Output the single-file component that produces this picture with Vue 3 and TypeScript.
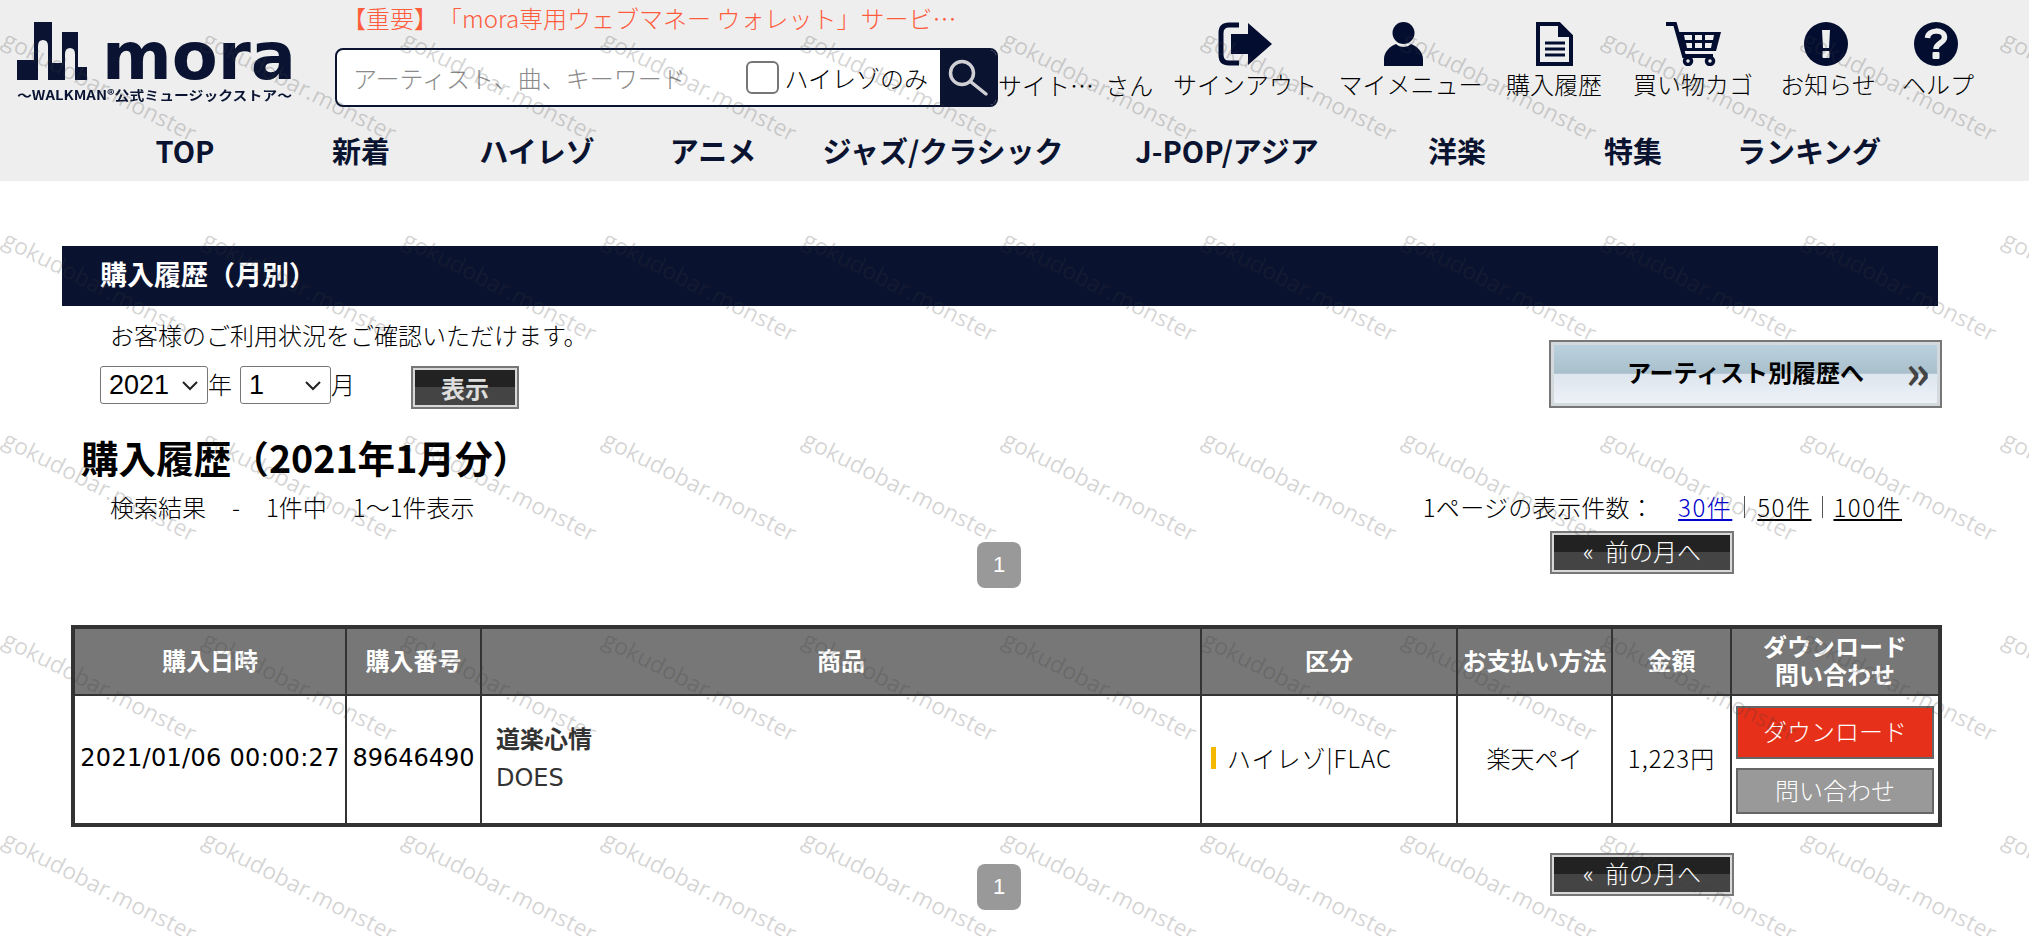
<script setup lang="ts">
const navItems = ['TOP', '新着', 'ハイレゾ', 'アニメ', 'ジャズ/クラシック', 'J-POP/アジア', '洋楽', '特集', 'ランキング']
const columns = ['購入日時', '購入番号', '商品', '区分', 'お支払い方法', '金額']
const marks = Array.from({ length: 55 }, (_, i) => i)
</script>

<template>
  <div class="page">
    <header class="header">
      <div class="header-top">
        <svg class="logo" viewBox="0 0 295 95" width="295" height="95">
          <path
            fill-rule="evenodd"
            fill="#0a1432"
            d="M7 65V45H24V7H42V48H52V17H68V52H77V65ZM28 65H38V31Q38 25 33 25Q28 25 28 31ZM55 65H65V39Q65 33 60 33Q55 33 55 39Z"
          />
          <text class="logo-word" x="92" y="64" textLength="194" lengthAdjust="spacingAndGlyphs">mora</text>
          <text class="logo-tag" x="7" y="85" textLength="275" lengthAdjust="spacingAndGlyphs">～WALKMAN®公式ミュージックストア～</text>
        </svg>

        <div class="search-col">
          <p class="notice">【重要】「mora専用ウェブマネー ウォレット」サービ…</p>
          <div class="search">
            <span class="placeholder">アーティスト、曲、キーワード</span>
            <label class="hires"><input type="checkbox" />ハイレゾのみ</label>
            <span class="search-btn">
              <svg viewBox="0 0 58 58" width="58" height="58">
                <circle cx="22" cy="24" r="11.5" fill="none" stroke="#cfcfd4" stroke-width="3.5" />
                <path d="M31 33L46 45" stroke="#cfcfd4" stroke-width="3.5" stroke-linecap="round" />
              </svg>
            </span>
          </div>
        </div>

        <div class="user-name">サイト… さん</div>

        <nav class="user-menu">
          <a class="menu-item">
            <svg viewBox="0 0 54 44" width="54" height="44">
              <path d="M21 3H11Q3 3 3 11V33Q3 41 11 41H21" fill="none" stroke="#030d30" stroke-width="5" />
              <path d="M13 12H30V1L54 22L30 43V32H13Z" fill="#030d30" />
            </svg>
            <span>サインアウト</span>
          </a>
          <a class="menu-item">
            <svg class="shift-big" viewBox="0 0 39 44" width="39" height="44">
              <circle cx="19.5" cy="11" r="11" fill="#030d30" />
              <path d="M0 44V37C0 30 6 24 12 22C16 26 23 26 27 22C33 24 39 30 39 37V44Z" fill="#030d30" />
            </svg>
            <span>マイメニュー</span>
          </a>
          <a class="menu-item">
            <svg viewBox="0 0 37 44" width="37" height="44">
              <path d="M2 2H23L35 14V42H2Z" fill="none" stroke="#030d30" stroke-width="4" />
              <path d="M22 2L36 15H22Z" fill="#030d30" />
              <path d="M9 21H29M9 27H29M9 33H29" stroke="#030d30" stroke-width="3" />
            </svg>
            <span>購入履歴</span>
          </a>
          <a class="menu-item">
            <svg viewBox="0 0 55 44" width="55" height="44">
              <path d="M0 2H9L18 34H47" fill="none" stroke="#030d30" stroke-width="4" />
              <path d="M12 10H55L50 29H17Z" fill="#030d30" />
              <path
                fill="#eee"
                d="M18 13H26V18H19ZM29 13H36V18H29ZM39 13H48L47 18H39ZM20 21H26V26H21ZM29 21H36V26H29ZM39 21H46L45 26H39Z"
              />
              <circle cx="22" cy="39" r="3.5" fill="#eee" stroke="#030d30" stroke-width="3.5" />
              <circle cx="44" cy="39" r="3.5" fill="#eee" stroke="#030d30" stroke-width="3.5" />
            </svg>
            <span>買い物カゴ</span>
          </a>
          <a class="menu-item">
            <svg class="shift-small" viewBox="0 0 44 44" width="44" height="44">
              <circle cx="22" cy="22" r="22" fill="#030d30" />
              <path d="M18 8H26L25 26H19Z" fill="#eee" />
              <rect x="18.500" y="29" width="7" height="7" rx="1" fill="#eee" />
            </svg>
            <span>お知らせ</span>
          </a>
          <a class="menu-item">
            <svg class="shift-small" viewBox="0 0 44 44" width="44" height="44">
              <circle cx="22" cy="22" r="22" fill="#030d30" />
              <path d="M13.500 16C14 7 30 7 30.500 15C31 21 22 21 22 27" fill="none" stroke="#eee" stroke-width="5.500" />
              <rect x="18.500" y="30" width="7" height="7" rx="1" fill="#eee" />
            </svg>
            <span>ヘルプ</span>
          </a>
        </nav>
      </div>

      <nav class="main-nav">
        <a v-for="item in navItems" :key="item">{{ item }}</a>
      </nav>
    </header>

    <main class="content">
      <h2 class="bar">購入履歴（月別）</h2>

      <div class="filter-row">
        <div>
          <p class="intro">お客様のご利用状況をご確認いただけます。</p>
          <form class="filter-form" @submit.prevent>
            <select class="year">
              <option>2021</option>
            </select>
            <span>年</span>
            <select class="month">
              <option>1</option>
            </select>
            <span>月</span>
            <button class="dark-btn show-btn">表示</button>
          </form>
        </div>
        <a class="artist-btn">アーティスト別履歴へ<span class="chevrons">»</span></a>
      </div>

      <h1 class="title">購入履歴（2021年1月分）</h1>

      <div class="results">
        <div class="count">
          <span>検索結果</span>
          <span>-</span>
          <span>1件中</span>
          <span>1～1件表示</span>
        </div>
        <div class="per-page">
          <span class="per-label">1ページの表示件数：</span>
          <a class="current">30件</a>
          <i></i>
          <a>50件</a>
          <i class="tight"></i>
          <a>100件</a>
        </div>
      </div>

      <div class="pager first">
        <span class="page-num">1</span>
        <a class="dark-btn prev-btn">« 前の月へ</a>
      </div>

      <table class="history">
        <thead>
          <tr>
            <th v-for="col in columns" :key="col">{{ col }}</th>
            <th>ダウンロード<br />問い合わせ</th>
          </tr>
        </thead>
        <tbody>
          <tr>
            <td class="wide-latin date">2021/01/06 00:00:27</td>
            <td class="wide-latin">89646490</td>
            <td class="product">
              <strong>道楽心情</strong>
              <span class="wide-latin">DOES</span>
            </td>
            <td class="kind"><span class="kind-inner">ハイレゾ|FLAC</span></td>
            <td>楽天ペイ</td>
            <td class="amount">1,223円</td>
            <td class="actions">
              <a class="action download">ダウンロード</a>
              <a class="action inquiry">問い合わせ</a>
            </td>
          </tr>
        </tbody>
      </table>

      <div class="pager last">
        <span class="page-num">1</span>
        <a class="dark-btn prev-btn">« 前の月へ</a>
      </div>
    </main>

    <div class="watermarks">
      <span v-for="n in marks" :key="n">gokudobar.monster</span>
    </div>
  </div>
</template>

<style>
html,
body {
  overflow: hidden;
  background: #fff;
}
</style>

<style scoped>
.page {
  position: relative;
  height: 936px;
  overflow: hidden;
  font-family: "Noto Sans CJK JP", "Noto Sans", sans-serif;
  font-size: 24px;
  font-weight: 300;
  color: #000;
  text-spacing-trim: space-all;
}
p,
h1,
h2 {
  margin: 0;
}

.header {
  height: 181px;
  background: #eee;
}
.header-top {
  display: flex;
  height: 130px;
}
.logo {
  flex: none;
  margin: 15px 30px 0 10px;
  filter: blur(0.5px);
}
.logo-word {
  font-family: "DejaVu Sans", sans-serif;
  font-weight: 700;
  font-size: 66px;
  fill: #0a1432;
}
.logo-tag {
  font-weight: 700;
  font-size: 13px;
  fill: #0a1432;
}
.search-col {
  flex: none;
  width: 663px;
}
.notice {
  height: 36px;
  padding-left: 7px;
  line-height: 36px;
  color: #ff5c3c;
  white-space: nowrap;
}
.search {
  display: flex;
  align-items: center;
  height: 59px;
  margin-top: 12px;
  background: #fff;
  border: 2px solid #0a1330;
  border-radius: 8px;
  box-sizing: border-box;
  overflow: hidden;
}
.placeholder {
  flex: 1;
  padding-left: 16px;
  color: #8a8a8a;
  white-space: nowrap;
}
.hires {
  display: flex;
  align-items: center;
  gap: 5px;
  margin-right: 12px;
}
.hires input {
  appearance: none;
  width: 33px;
  height: 33px;
  margin: 0;
  background: #fff;
  border: 2px solid #767676;
  border-radius: 6px;
}
.search-btn {
  display: block;
  width: 56px;
  height: 58px;
  background: #0a1330;
}
.user-name {
  flex: none;
  width: 165px;
  margin-top: 67px;
  line-height: 36px;
  white-space: nowrap;
  word-spacing: 6px;
}
.user-menu {
  display: grid;
  flex: none;
  grid-template-columns: 164px 167px 120px 158px 112px 108px;
  margin-top: 22px;
}
.menu-item {
  display: flex;
  flex-direction: column;
  align-items: center;
  white-space: nowrap;
}
.menu-item span {
  height: 36px;
  line-height: 36px;
}
.shift-big {
  margin-right: 14px;
}
.shift-small {
  margin-right: 4px;
}
.main-nav {
  display: grid;
  grid-template-columns: repeat(4, 176px) 284px 284px repeat(3, 176px);
  padding-left: 97px;
  font-size: 29px;
  font-weight: 700;
  line-height: 40px;
  color: #0a1330;
  text-align: center;
}

.content {
  width: 1880px;
  margin: 65px 0 0 62px;
}
.bar {
  width: 1876px;
  height: 60px;
  padding-left: 38px;
  box-sizing: border-box;
  background: #09122e;
  color: #fff;
  font-size: 27px;
  font-weight: 700;
  line-height: 56px;
}
.filter-row {
  display: flex;
  justify-content: space-between;
  height: 102px;
}
.intro {
  margin-top: 11px;
  padding-left: 48px;
  line-height: 36px;
}
.filter-form {
  display: flex;
  align-items: flex-start;
  margin: 13px 0 0 38px;
}
.filter-form span {
  line-height: 36px;
}
.filter-form select {
  appearance: none;
  height: 38px;
  padding: 0 0 0 8px;
  background: #fff url("data:image/svg+xml,%3Csvg xmlns='http://www.w3.org/2000/svg' width='18' height='11'%3E%3Cpath d='M2 2L9 9L16 2' fill='none' stroke='%23222' stroke-width='2'/%3E%3C/svg%3E") no-repeat right 8px center;
  border: 1px solid #767676;
  border-radius: 3px;
  font-family: "Liberation Sans", sans-serif;
  font-size: 27px;
  color: #000;
}
.year {
  width: 108px;
}
.month {
  width: 91px;
  margin-left: 8px;
}
.dark-btn {
  display: block;
  box-sizing: border-box;
  background: linear-gradient(#222 50%, #444 50%);
  border: 2px solid #777;
  box-shadow: inset 0 0 0 2px #d8d8d8;
  color: #fff;
  font-family: inherit;
  font-size: 24px;
  text-align: center;
}
.show-btn {
  width: 108px;
  height: 43px;
  margin-left: 56px;
  padding: 0;
  color: #ddd;
  font-weight: 700;
  line-height: 36px;
}
.artist-btn {
  position: relative;
  display: block;
  box-sizing: border-box;
  width: 393px;
  height: 68px;
  margin-top: 34px;
  background: linear-gradient(#bcd2e0, #a9c0cc 49%, #dde5ee 50%, #eef3f9);
  border: 2px solid #777;
  box-shadow: inset 0 0 0 3px #d4d9dd;
  font-weight: 700;
  line-height: 60px;
  text-align: center;
}
.chevrons {
  position: absolute;
  right: 10px;
  top: -3px;
  color: #444;
  font-size: 46px;
}
.title {
  margin: 24px 0 0 19px;
  font-size: 37.6px;
  font-weight: 700;
  line-height: 50px;
  color: #000;
}
.results {
  display: flex;
  justify-content: space-between;
  height: 36px;
  margin-top: 7px;
  padding: 0 40px 0 48px;
  line-height: 36px;
}
.count {
  display: flex;
  gap: 26px;
}
.per-page {
  display: flex;
  align-items: center;
}
.per-page a {
  color: #000;
  text-decoration: underline;
  letter-spacing: 1.5px;
}
.per-page a.current {
  color: #00c;
}
.per-page i {
  width: 1px;
  height: 22px;
  margin: 0 12px;
  background: #555;
}
.per-page i.tight {
  margin: 0 10.5px;
}
.per-label {
  margin-right: 24px;
  letter-spacing: 0.3px;
}
.pager {
  display: flex;
  align-items: flex-start;
  gap: 529px;
  padding-left: 915px;
}
.pager.first {
  margin-top: 6px;
}
.pager.last {
  margin-top: 26px;
}
.page-num {
  width: 44px;
  height: 46px;
  margin-top: 11px;
  background: #999;
  border-radius: 8px;
  color: #fff;
  font-family: "Liberation Sans", sans-serif;
  font-size: 22px;
  line-height: 46px;
  text-align: center;
}
.prev-btn {
  width: 184px;
  height: 43px;
  line-height: 36px;
  word-spacing: 6px;
}

.history {
  width: 1871px;
  height: 202px;
  margin: 37px 0 0 9px;
  border: 4px solid #333;
  border-collapse: collapse;
  table-layout: fixed;
  text-align: center;
}
.history th,
.history td {
  box-sizing: border-box;
  padding: 0 0 4px;
  border: 2px solid #333;
}
.history th {
  height: 68px;
  background: #777;
  color: #fff;
  font-size: 24px;
  font-weight: 700;
  line-height: 28px;
}
.history th:nth-child(1) {
  width: 273px;
}
.history th:nth-child(2) {
  width: 135px;
}
.history th:nth-child(3) {
  width: 720px;
}
.history th:nth-child(4) {
  width: 256px;
}
.history th:nth-child(5) {
  width: 155px;
}
.history th:nth-child(6) {
  width: 119px;
}
.wide-latin {
  font-family: "DejaVu Sans", "Noto Sans CJK JP", sans-serif;
  font-weight: 400;
}
.date {
  letter-spacing: 0.3px;
}
.history .product {
  padding-left: 14px;
  color: #333;
  text-align: left;
}
.product strong,
.product span {
  display: block;
  line-height: 40px;
}
.product strong {
  font-weight: 700;
}
.history .kind {
  padding-left: 9px;
  text-align: left;
}
.kind-inner {
  display: inline-block;
  padding-left: 11px;
  border-left: 5px solid #f5b800;
  line-height: 22px;
  letter-spacing: 1px;
}
.amount {
  letter-spacing: 1px;
}
.history .actions {
  padding: 8px 4px;
}
.action {
  display: block;
  box-sizing: border-box;
  border: 2px solid #666;
  color: #fff;
}
.download {
  height: 53px;
  background: #e63019;
  line-height: 46px;
}
.inquiry {
  height: 46px;
  margin-top: 9px;
  background: #999;
  line-height: 40px;
}

.watermarks {
  position: absolute;
  inset: 0;
  display: grid;
  grid-template-columns: repeat(11, 200px);
  grid-auto-rows: 200px;
  padding: 25px 0 0 5px;
  pointer-events: none;
}
.watermarks span {
  font-family: "Open Sans", sans-serif;
  font-size: 23px;
  font-weight: 400;
  line-height: 24px;
  height: 24px;
  white-space: nowrap;
  color: rgba(60, 60, 60, 0.22);
  transform: rotate(27deg);
  transform-origin: 0 50%;
}
</style>
